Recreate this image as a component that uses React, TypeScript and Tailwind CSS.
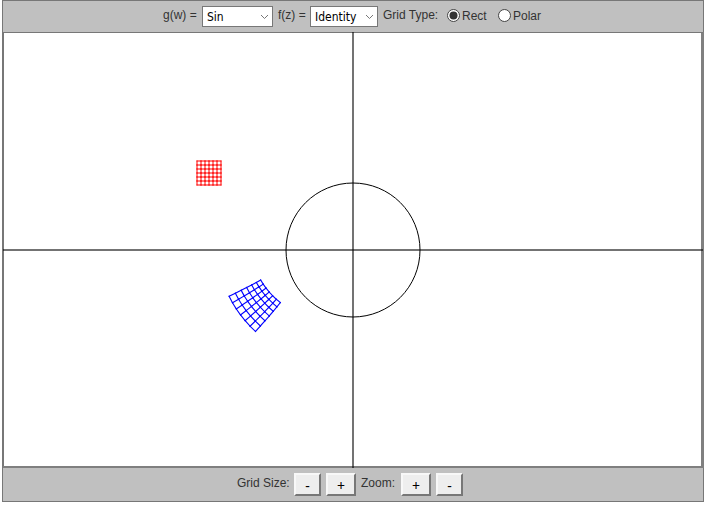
import React from "react";

const UNIT = 67;
const CX = 353;
const CY = 218;
const LEFT = 197;
const TOP = 129;
const CELL = 4;
const STEPS = [0, 1, 2, 3, 4, 5, 6];

type Point = [number, number];

function identity(px: number, py: number): Point {
  return [px, py];
}

function sine(px: number, py: number): Point {
  const x = (px - CX) / UNIT;
  const y = (CY - py) / UNIT;
  const u = Math.sin(x) * Math.cosh(y);
  const v = Math.cos(x) * Math.sinh(y);
  return [CX + u * UNIT + 0.8, CY - v * UNIT + 0.6];
}

function Mesh({ map, color, width }: { map: (x: number, y: number) => Point; color: string; width: number }) {
  const at = (i: number, j: number) => map(LEFT + i * CELL, TOP + j * CELL);
  const segments: [Point, Point][] = [];
  STEPS.forEach((i) =>
    STEPS.slice(1).forEach((j) => {
      segments.push([at(i, j - 1), at(i, j)]);
      segments.push([at(j - 1, i), at(j, i)]);
    }),
  );
  return (
    <g stroke={color} strokeWidth={width} strokeLinecap="square">
      {segments.map(([a, b], k) => (
        <line key={k} x1={a[0]} y1={a[1]} x2={b[0]} y2={b[1]} />
      ))}
    </g>
  );
}

function Plane() {
  return (
    <svg className="-ml-[3px] block shrink-0" width="706" height="436" viewBox="0 0 706 436" fill="none">
      <path d="M3 0V436" stroke="#777" strokeWidth="2" />
      <path d="M702.5 0V436" stroke="#808080" strokeWidth="3" />
      <path d="M3 435H703" stroke="#7f7f7f" strokeWidth="2" />
      <path d="M3 0.5H703" stroke="#777" />
      <path d="M353 0V436" stroke="#000" strokeOpacity="0.55" strokeWidth="2" />
      <path d="M3 218H703" stroke="#000" strokeOpacity="0.55" strokeWidth="2" />
      <circle cx={CX} cy={CY} r={UNIT} stroke="#000" />
      <Mesh map={identity} color="#f00" width={1} />
      <Mesh map={sine} color="#00f" width={1.1} />
    </svg>
  );
}

function Select({ value, className }: { value: string; className: string }) {
  return (
    <div
      role="combobox"
      className={`mt-[5px] flex h-[21px] items-center justify-between border border-[#777] bg-white pl-1 pr-[3px] font-['DejaVu_Sans_Condensed','DejaVu_Sans',sans-serif] text-[12px] [font-stretch:condensed] leading-[19px] text-black ${className}`}
    >
      <span className="whitespace-nowrap pt-[2px]">{value}</span>
      <svg width="9" height="6" viewBox="0 0 9 6" fill="none">
        <path d="M1 1l3.5 3.5L8 1" stroke="#777" />
      </svg>
    </div>
  );
}

function Radio({ label, checked, className }: { label: string; checked?: boolean; className: string }) {
  return (
    <label className={`flex items-start gap-[2px] ${className}`}>
      <svg className="mt-[8px] shrink-0" width="13" height="13" viewBox="0 0 13 13">
        <circle cx="6.5" cy="6.5" r="6" fill="#fff" stroke="#444" />
        {checked && <circle cx="6.5" cy="6.5" r="4" fill="#333" />}
      </svg>
      <span className="pt-[7px]">{label}</span>
    </label>
  );
}

function PushButton({ children, className }: { children: string; className: string }) {
  return (
    <button
      className={`mt-[5px] flex h-[23px] items-center justify-center border-2 border-t-[#f8f8f8] border-l-[#f8f8f8] border-r-[#777] border-b-[#777] bg-[#eee] pt-[2px] font-['Noto_Sans',sans-serif] text-[14px] leading-none text-black ${className}`}
    >
      {children}
    </button>
  );
}

export default function App() {
  return (
    <div className="h-[506px] w-[706px] overflow-hidden bg-white pl-[2px] font-['Liberation_Sans',Arial,sans-serif] text-[12px] leading-4 text-[#333]">
      <div className="flex h-[502px] w-[702px] flex-col border border-[#777] bg-[#c0c0c0]">
        <div className="flex h-[31px] shrink-0 items-start whitespace-nowrap">
          <span className="ml-[160px] w-[39px] pt-[6px]">g(w) =</span>
          <Select value="Sin" className="w-[71px]" />
          <span className="ml-[5px] w-[32px] pt-[6px]">f(z) =</span>
          <Select value="Identity" className="w-[68px]" />
          <span className="ml-[5px] w-[64px] pt-[6px]">Grid Type:</span>
          <Radio label="Rect" checked className="w-[51px]" />
          <Radio label="Polar" className="" />
        </div>
        <div className="h-[436px] w-[700px] shrink-0 bg-white">
          <Plane />
        </div>
        <div className="flex h-[33px] shrink-0 items-start whitespace-nowrap">
          <span className="ml-[234px] w-[57px] pt-[7px]">Grid Size:</span>
          <PushButton className="w-[27px]">-</PushButton>
          <PushButton className="ml-[5px] w-[30px]">+</PushButton>
          <span className="ml-[5px] w-[40px] pt-[7px]">Zoom:</span>
          <PushButton className="w-[30px]">+</PushButton>
          <PushButton className="ml-[5px] w-[27px]">-</PushButton>
        </div>
      </div>
    </div>
  );
}
